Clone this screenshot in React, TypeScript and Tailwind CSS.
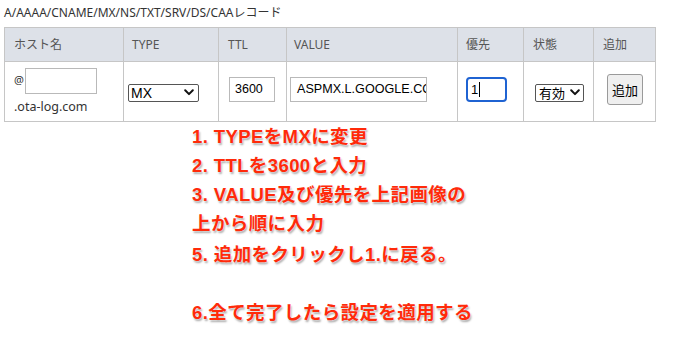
import React from "react";

const Chevron = () => (
  <svg width="10" height="7" viewBox="0 0 10 7" className="shrink-0">
    <path d="M1.2 1.3 L5 5.1 L8.8 1.3" fill="none" stroke="#111" strokeWidth="2" strokeLinecap="round" strokeLinejoin="round" />
  </svg>
);

export default function App() {
  const sans = "font-['Noto_Sans','Noto_Sans_CJK_JP',sans-serif]";
  const arial = "font-['Liberation_Sans','Noto_Sans_CJK_JP',sans-serif]";
  const th = `h-[34px] border border-[#c6c6c6] bg-[#dde1e8] text-left align-middle text-[12px] font-normal text-[#555] ${sans}`;
  const td = "border border-[#c6c6c6] align-middle p-0";
  const lines = [
    "1. TYPEをMXに変更",
    "2. TTLを3600と入力",
    "3. VALUE及び優先を上記画像の",
    "上から順に入力",
    "5. 追加をクリックし1.に戻る。",
    "\u00a0",
    "6.全て完了したら設定を適用する",
  ];
  return (
    <div className="w-[678px] h-[352px] bg-white pl-[4px] overflow-hidden">
      <div className={`h-[27px] pt-[5px] text-[12px] leading-[16px] text-[#333] ${sans}`}>
        A/AAAA/CNAME/MX/NS/TXT/SRV/DS/CAAレコード
      </div>
      <table className="border-collapse table-fixed w-[651px]">
        <colgroup>
          <col className="w-[119px]" />
          <col className="w-[95px]" />
          <col className="w-[68px]" />
          <col className="w-[171px]" />
          <col className="w-[66px]" />
          <col className="w-[70px]" />
          <col className="w-[62px]" />
        </colgroup>
        <thead>
          <tr>
            <th className={`${th} pl-[9px]`}>ホスト名</th>
            <th className={`${th} pl-[8px]`}>TYPE</th>
            <th className={`${th} pl-[9px]`}>TTL</th>
            <th className={`${th} pl-[7px]`}>VALUE</th>
            <th className={`${th} pl-[8px]`}>優先</th>
            <th className={`${th} pl-[9px]`}>状態</th>
            <th className={`${th} pl-[9px]`}>追加</th>
          </tr>
        </thead>
        <tbody>
          <tr className="h-[60px]">
            <td className={`${td} pl-[9px]`}>
              <div className="flex flex-col">
                <div className="flex items-start gap-[1px]">
                  <span className={`text-[11px] leading-[14px] mt-[5px] text-[#333] ${sans}`}>@</span>
                  <div className="w-[72px] h-[26px] border border-[#b9b9b9] bg-white" />
                </div>
                <div className={`mt-[5px] text-[12.5px] leading-[16px] text-[#333] ${sans}`}>.ota-log.com</div>
              </div>
            </td>
            <td className={`${td} pl-[4px] pt-[2px]`}>
              <div className={`w-[71px] h-[18px] border border-[#555] rounded-[2px] flex items-center justify-between pl-[2px] pr-[4px] text-[14px] text-black ${arial}`}>
                <span className="leading-[16px]">MX</span>
                <Chevron />
              </div>
            </td>
            <td className={`${td} pl-[10px] pb-[5px]`}>
              <div className={`w-[46px] h-[25px] border border-[#b9b9b9] flex items-center pl-[5px] text-[12.5px] text-black ${arial}`}>
                3600
              </div>
            </td>
            <td className={`${td} pl-[3px] pb-[5px]`}>
              <div className={`w-[137px] h-[25px] border border-[#b9b9b9] flex items-center pl-[6px] overflow-hidden whitespace-nowrap text-[12.6px] text-black ${arial}`}>
                ASPMX.L.GOOGLE.COM
              </div>
            </td>
            <td className={`${td} pl-[8px] pb-[4px]`}>
              <div className={`w-[41px] h-[25px] border-2 border-[#1f63d2] rounded-[4px] flex items-center pl-[3px] text-[13px] text-black ${arial}`}>
                <span>1</span>
                <span className="inline-block w-[1px] h-[15px] bg-black ml-[1px]" />
              </div>
            </td>
            <td className={`${td} pl-[11px] pt-[2px]`}>
              <div className={`w-[49px] h-[18px] border border-[#555] rounded-[2px] flex items-center justify-between pl-[3px] pr-[3px] text-[13px] text-black font-['Noto_Sans_CJK_JP',sans-serif]`}>
                <span className="leading-[16px]">有効</span>
                <Chevron />
              </div>
            </td>
            <td className={`${td} pl-[13px] pb-[4px]`}>
              <div className={`w-[36px] h-[31px] border border-[#9a9a9a] rounded-[3px] bg-[#efefef] flex items-center justify-center text-[13px] text-black font-['Noto_Sans_CJK_JP',sans-serif]`}>
                追加
              </div>
            </td>
          </tr>
        </tbody>
      </table>
      <div className="pl-[188px]">
        {lines.map((l, i) => (
          <div
            key={i}
            className={`${i === 4 ? "h-[31px] pt-[2px]" : "h-[29px]"} leading-[29px] text-[18.5px] tracking-[0.4px] font-bold text-[#ff2a0a] whitespace-nowrap font-['Liberation_Sans','Noto_Sans_CJK_JP',sans-serif] [text-shadow:0_0_2px_#fff,1px_2px_2px_rgba(0,0,0,0.35)]`}
          >
            {l}
          </div>
        ))}
      </div>
    </div>
  );
}
